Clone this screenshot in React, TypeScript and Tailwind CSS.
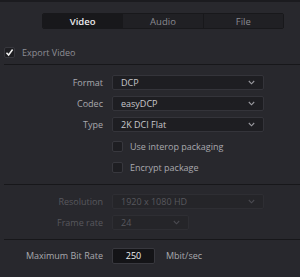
import React from 'react';

const Chevron: React.FC<{ dim?: boolean }> = ({ dim }) => (
  <svg width="7" height="5" viewBox="0 0 7 5" className={dim ? 'text-[#4a4a50]' : 'text-[#9a9aa0]'}>
    <path d="M0.8 1 L3.5 3.8 L6.2 1" fill="none" stroke="currentColor" strokeWidth="1.1" />
  </svg>
);

const Select: React.FC<{ value: string; width?: string; dim?: boolean }> = ({ value, width = 'w-[152px]', dim }) => (
  <div
    className={`${width} h-[15px] flex items-center justify-between pl-[8px] pr-[8px] rounded-[2px] border ${
      dim ? 'bg-[#252529] border-[#2e2e33] text-[#58585e]' : 'bg-[#1e1e22] border-[#34343a] text-[#c8c8cc]'
    }`}
  >
    <span>{value}</span>
    <Chevron dim={dim} />
  </div>
);

const Row: React.FC<{ label: string; dim?: boolean; children: React.ReactNode }> = ({ label, dim, children }) => (
  <div className="flex items-center h-[15px]">
    <div className={`w-[104px] text-right pr-[1px] ${dim ? 'text-[#58585e]' : 'text-[#a8a8ae]'}`}>{label}</div>
    <div className="ml-[8px] flex items-center">{children}</div>
  </div>
);

const Box: React.FC<{ checked?: boolean }> = ({ checked }) => (
  <div className="w-[11px] h-[11px] shrink-0 rounded-[2px] bg-[#1e1e22] border border-[#38383e] flex items-center justify-center">
    {checked && (
      <svg width="9" height="9" viewBox="0 0 9 9">
        <path d="M1.5 4.8 L3.6 7 L7.6 1.5" fill="none" stroke="#f2f2f2" strokeWidth="1.5" />
      </svg>
    )}
  </div>
);

const Divider = () => <div className="ml-[4px] h-px bg-[#17171a]" />;

export default function App() {
  return (
    <div
      className="w-[300px] h-[277px] bg-[#28282d] border-t-2 border-[#1b1b1f] text-[9px] leading-[11px] overflow-hidden"
      style={{ fontFamily: '"Open Sans", "Liberation Sans", sans-serif' }}
    >
      <div className="pt-[11px] flex justify-end pr-[16px]">
        <div className="w-[242px] h-[16px] flex border border-[#18181b] rounded-[2px] overflow-hidden text-[9.5px]">
          <div className="flex-1 flex items-center justify-center bg-[#18181b] text-[#ececee] font-semibold">Video</div>
          <div className="flex-1 flex items-center justify-center bg-[#202024] text-[#8a8a90] border-l border-[#18181b]">Audio</div>
          <div className="flex-1 flex items-center justify-center bg-[#202024] text-[#8a8a90] border-l border-[#18181b]">File</div>
        </div>
      </div>

      <div className="mt-[18px] flex items-center pl-[4px] h-[11px]">
        <Box checked />
        <span className="ml-[7px] text-[#8e8e94]">Export Video</span>
      </div>

      <div className="mt-[6px]">
        <Divider />
      </div>

      <div className="mt-[10px] flex flex-col gap-[6px]">
        <Row label="Format">
          <Select value="DCP" />
        </Row>
        <Row label="Codec">
          <Select value="easyDCP" />
        </Row>
        <Row label="Type">
          <Select value="2K DCI Flat" />
        </Row>
      </div>

      <div className="mt-[9px] flex flex-col gap-[10px] pl-[112px]">
        <div className="flex items-center h-[11px]">
          <Box />
          <span className="ml-[7px] text-[#a8a8ae]">Use interop packaging</span>
        </div>
        <div className="flex items-center h-[11px]">
          <Box />
          <span className="ml-[7px] text-[#a8a8ae]">Encrypt package</span>
        </div>
      </div>

      <div className="mt-[11px]">
        <Divider />
      </div>

      <div className="mt-[9px] flex flex-col gap-[6px]">
        <Row label="Resolution" dim>
          <Select value="1920 x 1080 HD" dim />
        </Row>
        <Row label="Frame rate" dim>
          <Select value="24" width="w-[77px]" dim />
        </Row>
      </div>

      <div className="mt-[9px]">
        <Divider />
      </div>

      <div className="mt-[8px]">
        <Row label="Maximum Bit Rate">
          <div className="w-[43px] h-[16px] bg-[#141417] border border-[#38383e] rounded-[2px] flex items-center justify-center text-[#f0f0f2]">
            250
          </div>
          <span className="ml-[11px] text-[#a8a8ae]">Mbit/sec</span>
        </Row>
      </div>
    </div>
  );
}
